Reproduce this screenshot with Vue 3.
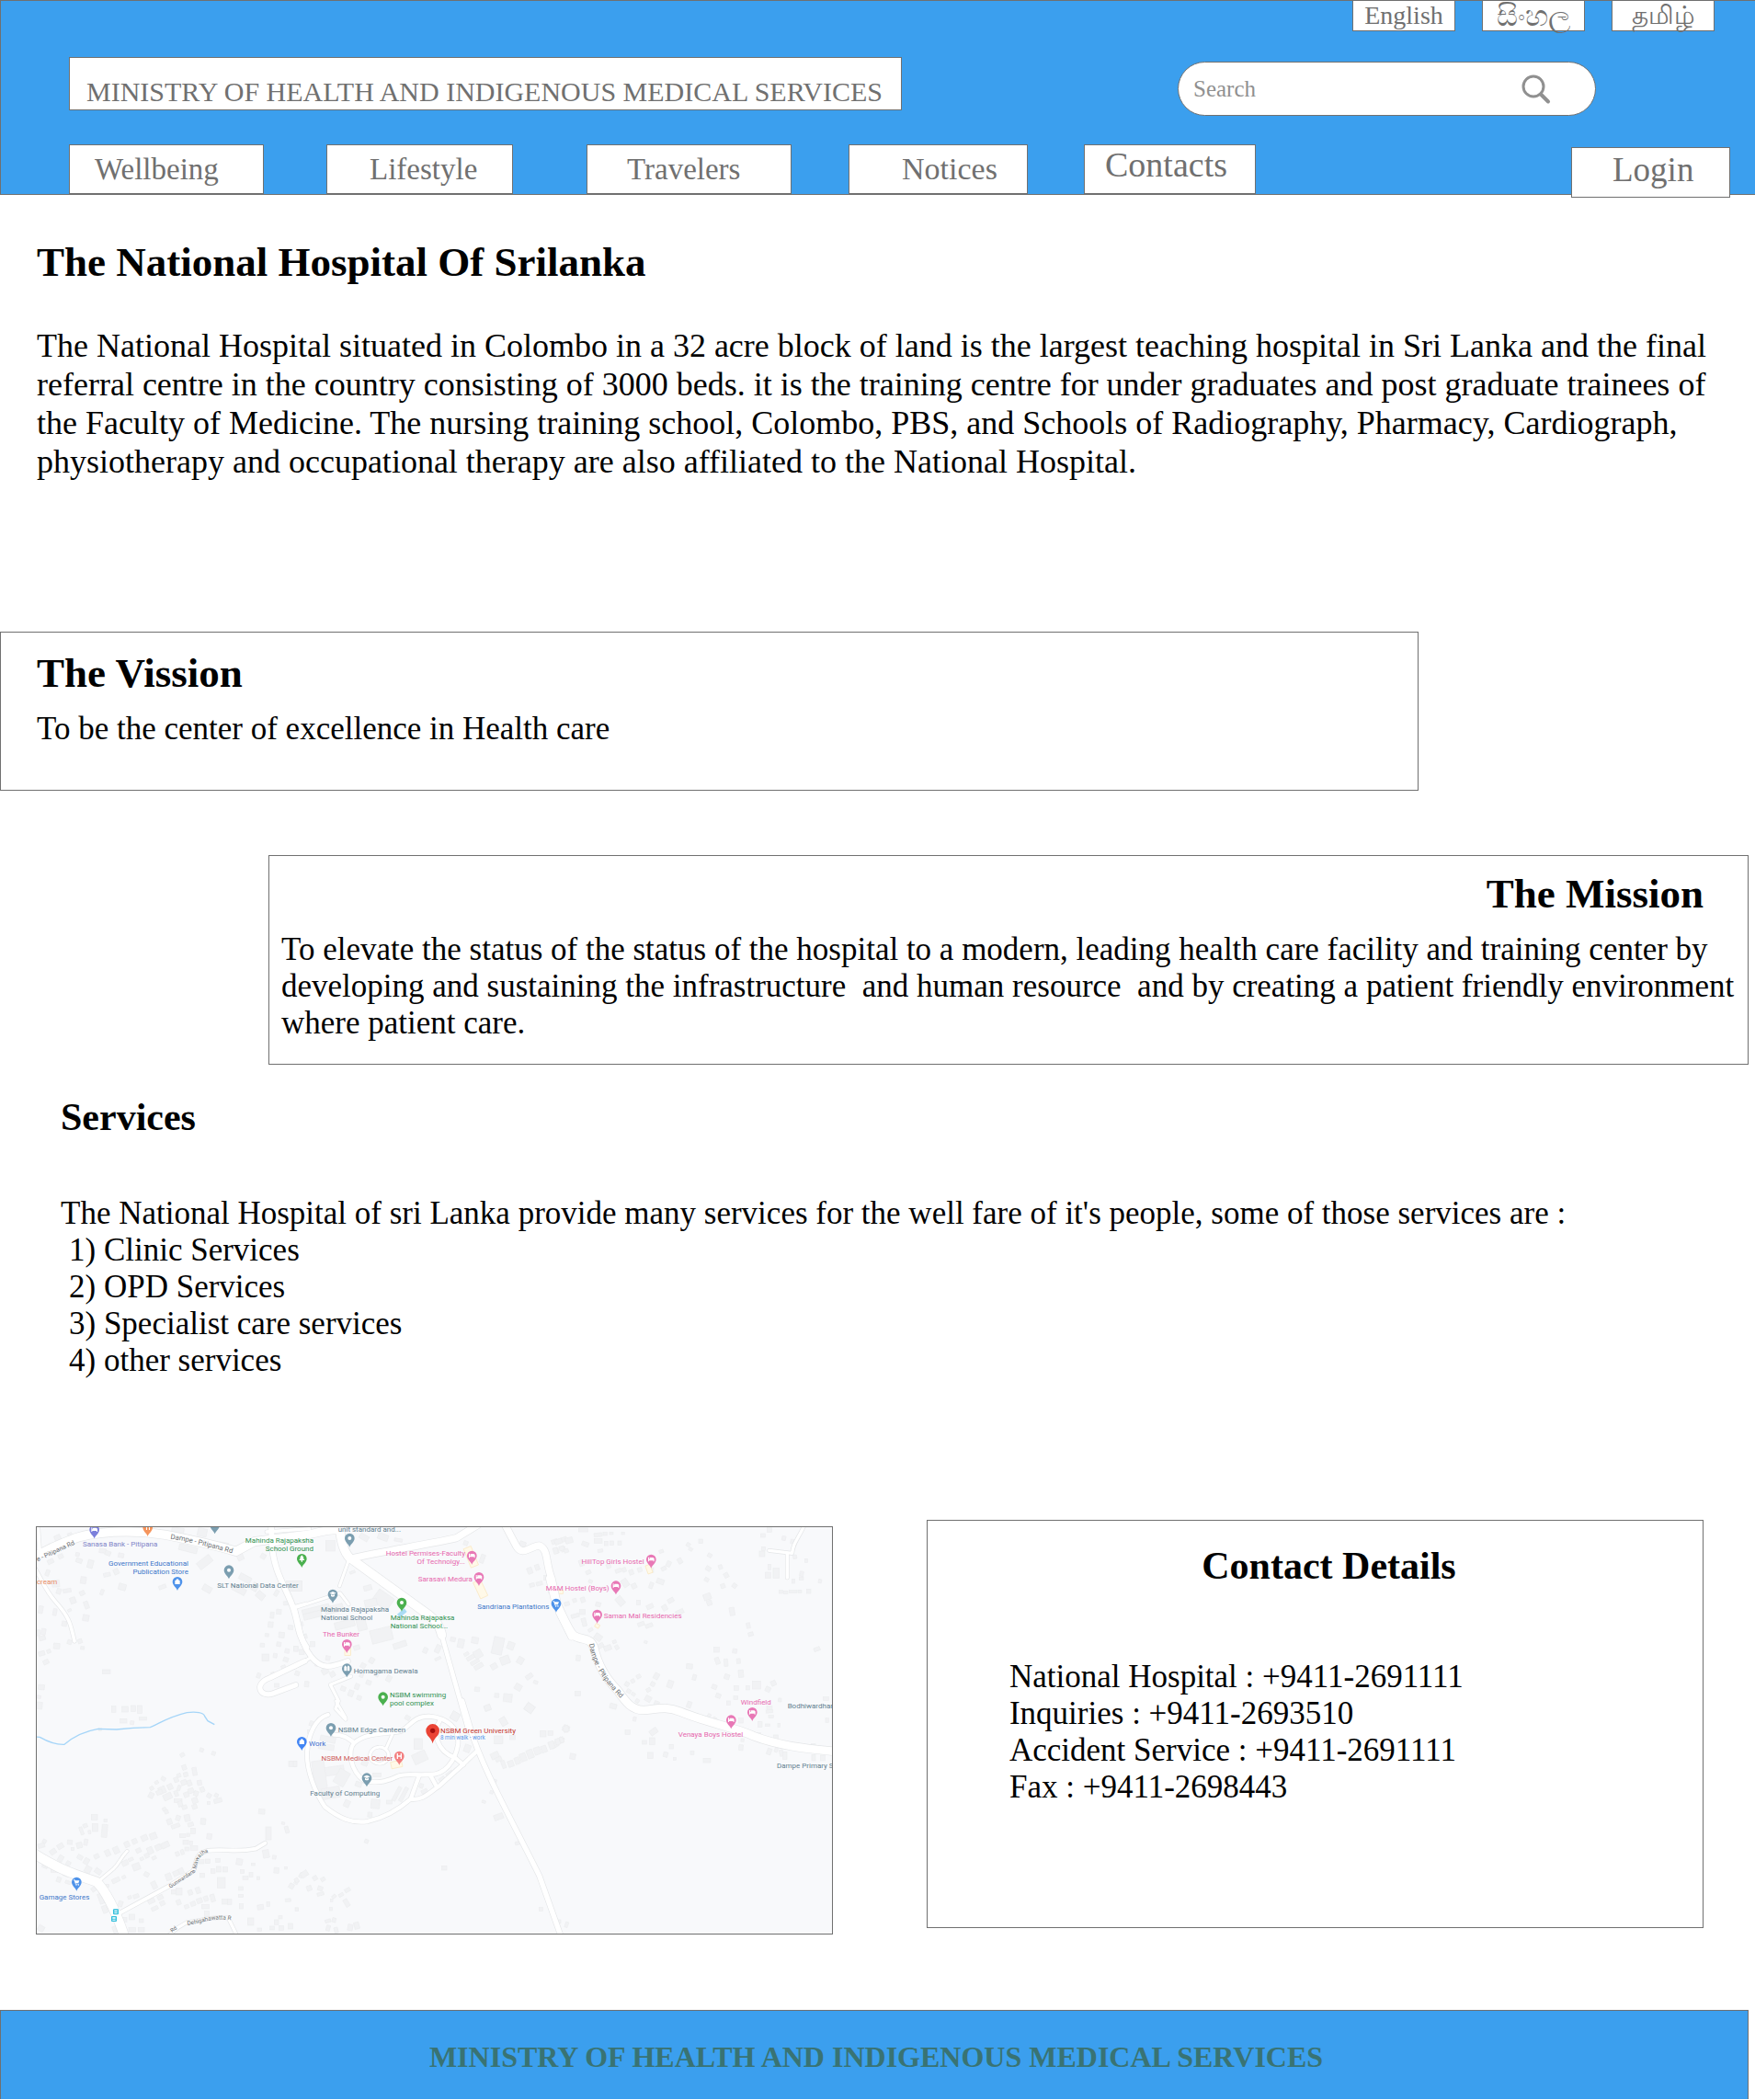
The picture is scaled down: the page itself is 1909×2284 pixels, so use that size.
<script setup>
const languages = [
  { label: 'English', lang: 'en' },
  { label: 'සිංහල', lang: 'si' },
  { label: 'தமிழ்', lang: 'ta' },
]

const navigation = [
  { label: 'Wellbeing', key: 'wellbeing' },
  { label: 'Lifestyle', key: 'lifestyle' },
  { label: 'Travelers', key: 'travelers' },
  { label: 'Notices', key: 'notices' },
  { label: 'Contacts', key: 'contacts' },
  { label: 'Login', key: 'login' },
]

const services = ['Clinic Services', 'OPD Services', 'Specialist care services', 'other services']

const contacts = [
  { name: 'National Hospital', phone: '+9411-2691111' },
  { name: 'Inquiries', phone: '+9411-2693510' },
  { name: 'Accident Service', phone: '+9411-2691111' },
  { name: 'Fax', phone: '+9411-2698443' },
]

// The map is drawn in tiles: each one holds its own roads, buildings, pins and labels.
// Building: [centre x, centre y, width, height, angle]
const GREY = '#7b9eb0'
const PINK = '#e878b6'
const GREEN = '#4bb04f'
const BLUE = '#4f93ea'

const tiles = [
  {
    id: 'nw', x: -30, y: -33,
    roads: [
      [32, 'M0 140L80 100C140 75 170 58 240 52C320 44 400 50 450 58C520 72 590 85 680 112L740 80L900 60'],
      [15, 'M32 0L40 120'],
      [15, 'M20 160C50 210 55 235 90 275C135 325 140 345 153 405'],
      [22, 'M795 20L797 80C800 180 850 240 868 300C885 350 880 380 910 425'],
      [14, 'M780 48L920 38'],
      [13, 'M868 293L910 282'],
      [20, 'M905 470L790 525C735 545 760 590 800 576L875 548'],
    ],
    buildings: [
      [98, 68, 20, 18, -25], [138, 58, 14, 12, -20], [75, 145, 20, 14, -25], [108, 128, 16, 14, -25], [168, 142, 20, 14, 20], [163, 122, 12, 12, 10], [205, 153, 18, 26, 15], [245, 110, 22, 14, 8], [262, 118, 18, 14, 20], [305, 125, 18, 14, 10],
      [65, 182, 12, 20, 20], [92, 217, 24, 22, -5], [182, 206, 18, 22, 8], [259, 188, 22, 12, -12], [289, 178, 16, 18, -25], [309, 228, 24, 20, 15], [243, 245, 10, 18, 20], [129, 240, 26, 12, -10], [102, 242, 14, 18, 20], [178, 248, 16, 14, -25], [148, 272, 18, 20, -20], [192, 287, 14, 24, -20], [89, 310, 12, 22, 10], [43, 302, 14, 24, 10], [137, 304, 12, 8, -25], [190, 329, 20, 20, 10], [120, 348, 16, 16, 10],
      [36, 378, 10, 20, 5], [52, 374, 14, 20, 10], [48, 395, 20, 14, -15], [95, 421, 20, 18, 5], [137, 408, 14, 14, 20], [171, 405, 14, 14, -20], [179, 427, 12, 10, 5], [46, 445, 20, 14, -15], [69, 438, 12, 12, -20], [60, 473, 18, 14, -25], [257, 505, 26, 14, 0], [45, 555, 20, 16, 5], [37, 587, 12, 10, 10], [38, 615, 20, 22, 5],
      [281, 627, 14, 20, 0], [318, 627, 20, 18, 0], [345, 625, 14, 20, 0], [366, 628, 14, 26, 0], [313, 665, 22, 14, 0], [341, 671, 12, 12, 10], [376, 658, 24, 10, 0],
      [578, 147, 50, 26, -38], [524, 103, 60, 20, 14], [586, 234, 30, 20, 30], [440, 228, 24, 12, -20], [570, 50, 30, 26, 12], [490, 45, 40, 20, 8], [640, 90, 30, 14, 10], [710, 200, 40, 20, 28], [690, 237, 46, 20, 28], [760, 256, 28, 22, 40], [694, 130, 20, 22, -25], [769, 128, 16, 16, 30], [742, 228, 20, 26, 30], [812, 248, 12, 20, 30], [880, 225, 32, 34, 0],
      [843, 281, 16, 12, -5], [820, 309, 16, 16, 5], [798, 320, 12, 20, 5], [793, 351, 16, 18, 5], [858, 360, 16, 14, 5], [781, 385, 12, 10, 5], [829, 385, 18, 18, 5], [766, 418, 14, 12, 5], [820, 415, 14, 14, 10], [876, 430, 14, 16, 5], [776, 458, 22, 22, 0], [847, 437, 14, 14, 10], [808, 452, 12, 14, 10], [843, 465, 16, 14, 20], [754, 517, 12, 16, 20], [801, 513, 12, 14, -20], [835, 490, 14, 12, -20], [880, 510, 14, 14, 20], [813, 549, 14, 12, 0],
    ],
    pins: [
      [218, 70, '#7b7fdb', 'bed'], [392, 63, '#f5945c', 'fork'], [611, 55, GREY, 'dot'], [489, 240, BLUE, 'bag'], [657, 202, GREY, 'dot'],
    ],
    labels: [
      [180, 97, 'start', '#7d83c7', 'Sanasa Bank - Pitipana'],
      [525, 158, 'end', '#3d77c9', 'Government Educational'],
      [525, 185, 'end', '#3d77c9', 'Publication Store'],
      [97, 219, 'end', '#e98b63', 'cream'],
      [619, 230, 'start', '#62808f', 'SLT National Data Center'],
    ],
    streets: [
      ['M33 145L190 72', 'e - Pitipana Rd', 21],
      ['M466 71C530 80 600 100 690 124', 'Dampe - Pitipana Rd', 23],
    ],
  },
  {
    id: 'n', x: 840, y: -33,
    roads: [
      [30, 'M-60 80L40 58C100 45 120 40 150 42'],
      [32, 'M148 20C150 70 160 110 180 132L440 320C470 345 475 360 482 385'],
      [26, 'M180 136C300 110 430 90 530 68L600 25'],
      [13, 'M178 140L148 225'],
      [13, 'M0 297L150 248L178 285'],
      [20, 'M0 295C20 370 20 410 55 455C90 500 120 490 175 470'],
      [14, 'M0 490L55 458'],
      [14, 'M185 520L118 547L145 600L135 625L168 660'],
      [18, 'M480 380L570 700'],
      [26, 'M688 25L725 95C745 130 770 95 800 93C830 105 820 150 840 200L865 310L905 390'],
      [13, 'M0 548L8 546'],
    ],
    buildings: [
      [118, 94, 30, 34, 0], [228, 66, 30, 18, 30], [290, 65, 34, 20, 20], [340, 75, 26, 10, 10], [0, 225, 50, 34, 0], [240, 231, 26, 16, -15], [190, 180, 18, 8, -20],
      [290, 270, 60, 46, 35], [250, 280, 40, 24, -12], [60, 320, 60, 20, -14], [70, 300, 90, 14, -14], [130, 300, 60, 24, -14], [165, 350, 66, 24, -14], [285, 385, 70, 44, -14], [220, 350, 30, 40, -14], [345, 417, 44, 18, -18], [428, 435, 14, 18, 25], [469, 430, 16, 26, 25], [469, 462, 20, 8, -25],
      [518, 399, 16, 14, 10], [544, 412, 20, 28, 12], [590, 402, 22, 20, 10], [562, 447, 16, 10, -30], [577, 458, 30, 12, -30], [590, 473, 30, 12, -30], [602, 487, 30, 14, -30], [600, 447, 26, 26, -30], [665, 420, 34, 56, 12], [707, 420, 22, 24, 20], [688, 467, 30, 26, -20], [652, 487, 20, 18, -30], [738, 468, 20, 22, 30], [767, 520, 24, 14, -35], [731, 555, 22, 20, 30], [788, 539, 14, 10, 20], [597, 562, 16, 14, 5], [661, 582, 14, 14, 5], [697, 590, 28, 26, 5], [768, 623, 28, 26, 35], [631, 623, 20, 18, -20], [683, 667, 20, 26, -30], [525, 650, 26, 26, 30],
      [769, 175, 16, 20, -20], [793, 164, 14, 18, -20], [776, 222, 16, 12, -15], [800, 217, 20, 12, -15], [822, 198, 14, 14, 0], [745, 90, 20, 20, 20], [850, 80, 20, 14, -20], [880, 73, 20, 14, -20], [856, 110, 14, 16, -15], [878, 105, 14, 16, -15], [840, 240, 20, 14, 0], [614, 136, 14, 28, 20], [560, 85, 14, 14, 20],
      [41, 545, 14, 18, 5], [101, 503, 22, 18, -30], [75, 480, 14, 14, 10], [125, 513, 16, 16, -30], [160, 560, 16, 14, 20], [185, 575, 16, 20, 20], [205, 553, 14, 18, 20], [212, 590, 14, 14, 20], [243, 540, 16, 14, 20], [253, 468, 16, 18, 30], [225, 485, 16, 16, 30], [270, 512, 14, 18, 30], [309, 527, 16, 20, 30], [204, 426, 20, 14, -15], [32, 390, 20, 14, -15], [20, 350, 18, 14, -15], [60, 415, 14, 16, 0], [25, 440, 16, 16, 0], [5, 430, 14, 16, 0], [110, 460, 14, 14, 10], [290, 590, 14, 14, 20], [220, 515, 12, 16, 20],
    ],
    yards: [[577, 130, 26, 66, -22], [608, 235, 26, 58, -25], [175, 440, 20, 24, 0]],
    ponds: [[352, 313, 30, 14, -40]],
    pins: [
      [181, 98, GREY, 'dot'], [25, 165, GREEN, 'tree'], [580, 155, PINK, 'bed'], [603, 225, PINK, 'bed'], [126, 281, GREY, 'cap'],
      [351, 308, GREEN, 'dot'], [855, 311, BLUE, 'cart'], [172, 444, PINK, 'bed'], [172, 523, GREY, 'temple'], [290, 616, GREEN, 'dot'],
    ],
    labels: [
      [143, 47, 'start', '#62808f', 'unit standard and...'],
      [63, 84, 'end', '#2f9150', 'Mahinda Rajapaksha'],
      [63, 111, 'end', '#2f9150', 'School Ground'],
      [558, 127, 'end', '#e768ae', 'Hostel Permises-Faculty'],
      [558, 154, 'end', '#e768ae', 'Of Technolgy...'],
      [582, 211, 'end', '#e768ae', 'Sarasavi Medura'],
      [87, 310, 'start', '#62808f', 'Mahinda Rajapaksha'],
      [87, 337, 'start', '#62808f', 'National School'],
      [314, 336, 'start', '#2f9150', 'Mahinda Rajapaksa'],
      [314, 363, 'start', '#2f9150', 'National School...'],
      [832, 300, 'end', '#3d77c9', 'Sandriana Plantations'],
      [93, 390, 'start', '#e768ae', 'The Bunker'],
      [194, 509, 'start', '#62808f', 'Homagama Dewala'],
      [312, 589, 'start', '#2f9150', 'NSBM swimming'],
      [312, 616, 'start', '#2f9150', 'pool complex'],
    ],
    streets: [],
  },
  {
    id: 'ne', x: 1680, y: -33,
    roads: [
      [30, 'M-5 200L15 280C35 320 50 360 70 385C100 405 125 390 138 425C150 480 180 530 215 565C240 600 260 630 300 630C340 628 370 615 420 635C520 675 610 690 660 715C740 745 820 755 930 765'],
      [14, 'M826 25C800 80 790 80 785 118L710 109'],
      [14, 'M769 120L769 198'],
    ],
    buildings: [
      [103, 42, 30, 12, 0], [22, 80, 24, 16, -20], [57, 76, 24, 18, -15], [13, 110, 14, 20, -15], [33, 102, 16, 14, -15], [48, 110, 14, 12, -20], [110, 88, 22, 14, 20], [152, 58, 26, 12, -5], [152, 78, 26, 14, 0], [175, 55, 14, 10, 0], [195, 53, 12, 8, 0], [178, 86, 12, 14, 0], [197, 85, 12, 14, 0], [222, 85, 12, 14, 0], [233, 53, 10, 8, 0], [159, 110, 16, 10, -10], [97, 150, 14, 20, -20], [120, 180, 16, 12, -25], [186, 160, 14, 14, -20], [218, 175, 20, 12, -20], [237, 172, 12, 14, -20], [260, 180, 14, 16, -20], [288, 172, 14, 14, -20], [325, 173, 16, 16, 0], [366, 168, 16, 12, -25], [382, 153, 14, 18, 25], [358, 112, 14, 10, -20], [419, 143, 14, 18, -30], [446, 90, 12, 12, 30], [454, 105, 12, 10, 30], [487, 79, 14, 14, 0], [516, 125, 14, 12, 30],
      [240, 215, 20, 26, -35], [269, 225, 16, 16, -25], [325, 223, 12, 20, 20], [355, 210, 24, 16, 20], [224, 274, 22, 30, -40], [284, 279, 12, 16, 0], [321, 292, 22, 14, -25], [369, 296, 16, 18, -30], [389, 272, 20, 14, -30], [418, 310, 26, 14, -25], [292, 349, 22, 12, -20], [318, 354, 24, 12, -20], [307, 408, 10, 8, 20], [127, 210, 12, 10, 20], [102, 270, 14, 16, -20], [75, 272, 12, 12, -20], [50, 283, 16, 12, -15], [152, 285, 16, 14, 15], [101, 310, 18, 16, 0], [77, 322, 26, 12, -15], [106, 343, 14, 26, -15], [127, 368, 16, 10, -30], [152, 392, 24, 20, 35], [183, 427, 24, 16, -20], [205, 407, 12, 10, -20], [213, 425, 12, 14, -30], [160, 420, 20, 14, -30],
      [511, 168, 16, 14, 30], [551, 163, 12, 14, -20], [570, 190, 14, 16, -30], [506, 204, 14, 12, 30], [559, 225, 14, 14, -20], [597, 224, 14, 14, 35], [508, 260, 24, 20, -20], [515, 280, 16, 16, -20], [589, 308, 16, 26, -10], [642, 354, 12, 18, -10], [650, 382, 16, 12, -15], [866, 431, 20, 12, -20], [538, 433, 18, 16, 0], [598, 437, 14, 14, 10], [541, 469, 14, 22, -20], [569, 475, 12, 24, -5], [610, 470, 12, 16, -5], [450, 487, 20, 16, 5], [466, 523, 12, 18, 15], [572, 521, 16, 16, 20], [618, 511, 16, 24, -5], [531, 554, 16, 14, 20], [603, 558, 14, 16, 0], [640, 557, 12, 14, 0], [669, 548, 26, 26, 0], [706, 562, 16, 16, 25], [724, 542, 16, 16, -25], [544, 583, 16, 14, 20], [577, 607, 12, 14, 0], [745, 597, 10, 12, 5], [711, 634, 22, 10, -5], [716, 651, 16, 8, 0], [742, 679, 8, 12, 0], [680, 676, 14, 18, 0], [705, 679, 16, 8, 0], [618, 664, 14, 16, 0], [895, 593, 18, 12, 0], [899, 663, 10, 14, 0], [711, 623, 18, 12, 0], [601, 590, 14, 12, 0],
      [87, 460, 14, 18, 5], [86, 576, 18, 14, 0], [201, 617, 22, 16, 15], [271, 659, 10, 14, 10], [246, 545, 14, 14, 30], [265, 535, 12, 12, -30], [284, 520, 14, 12, -30], [252, 568, 14, 12, 30], [330, 545, 14, 14, 30], [342, 519, 16, 20, 30], [316, 564, 14, 12, -30], [387, 545, 18, 24, 20], [315, 593, 20, 18, 30], [343, 608, 16, 14, 20], [449, 612, 14, 20, 20], [267, 578, 12, 10, 30], [280, 600, 12, 12, 30], [514, 648, 10, 12, 30], [532, 660, 12, 14, 30],
      [47, 690, 20, 20, 25], [32, 727, 16, 16, 20], [10, 743, 24, 18, -30], [69, 781, 18, 18, 10], [248, 702, 16, 14, 0], [333, 700, 26, 18, -35], [328, 731, 18, 22, 0], [303, 735, 14, 12, 0], [322, 778, 18, 20, 0], [372, 775, 14, 16, 15], [391, 749, 14, 14, 0], [402, 789, 10, 8, 0], [459, 769, 12, 12, 0], [507, 794, 24, 14, 0], [618, 752, 14, 18, 5], [623, 728, 10, 10, 5], [644, 703, 12, 10, 0], [677, 709, 12, 10, 0], [732, 719, 16, 16, 0], [710, 765, 14, 20, 20], [733, 760, 10, 14, 20], [750, 770, 12, 20, -15], [761, 778, 14, 24, 0], [854, 747, 14, 14, 0], [855, 785, 12, 20, 0], [885, 786, 16, 18, 0],
      [711, 42, 16, 14, 0], [690, 60, 14, 12, 0], [758, 69, 12, 14, 10], [692, 103, 12, 12, 0], [687, 120, 18, 18, 0], [794, 130, 12, 12, -10], [831, 142, 10, 12, 0], [711, 163, 10, 18, 0], [706, 190, 18, 20, 0], [733, 183, 20, 34, 0], [789, 209, 10, 14, 0], [816, 185, 12, 16, 10], [815, 200, 14, 10, 0], [876, 209, 10, 12, 10], [749, 244, 12, 10, 0], [764, 246, 14, 10, 0], [788, 243, 26, 8, 0], [810, 243, 12, 10, 0], [839, 242, 14, 14, 0], [786, 80, 12, 14, 10],
    ],
    yards: [[318, 170, 16, 28, -20], [28, 244, 18, 12, 0], [149, 355, 14, 12, 30]],
    pins: [
      [325, 167, PINK, 'bed'], [210, 253, PINK, 'bed'], [149, 347, PINK, 'bed'], [655, 666, PINK, 'bed'], [586, 691, PINK, 'bed'],
    ],
    labels: [
      [302, 154, 'end', '#e768ae', 'HillTop Girls Hostel'],
      [188, 240, 'end', '#e768ae', 'M&M Hostel (Boys)'],
      [170, 331, 'start', '#e768ae', 'Saman Mal Residencies'],
      [667, 611, 'middle', '#e768ae', 'Windfield'],
      [519, 717, 'middle', '#e768ae', 'Venaya Boys Hostel'],
      [770, 624, 'start', '#62808f', 'Bodhiwardhar'],
      [735, 819, 'start', '#62808f', 'Dampe Primary S'],
    ],
    streets: [['M122 415C138 490 170 540 245 610', 'Dampe - Pitipana Rd', 23]],
  },
  {
    id: 'sw', x: -30, y: 567,
    roads: [
      [34, 'M0 485C100 550 150 565 225 590C255 620 290 690 320 780'],
      [13, 'M232 588L280 548C300 530 300 515 325 490'],
      [16, 'M300 692L460 605L540 555C555 530 540 500 590 488C650 482 680 495 745 482L775 464'],
      [14, 'M430 790L490 740L520 722C580 715 600 702 655 708L690 780'],
    ],
    stream: 'M20 117L40 118C75 138 95 143 120 142C150 115 190 98 230 91L290 93L345 88L400 86C430 75 450 55 520 38C550 34 575 38 578 50L588 65L610 77',
    buildings: [
      [505, 176, 14, 12, -30], [568, 160, 12, 12, 20], [607, 171, 12, 12, 20], [511, 217, 14, 16, -20], [545, 230, 14, 26, -10], [516, 240, 14, 14, -15], [494, 243, 12, 12, -20], [443, 254, 14, 12, 30], [485, 257, 14, 16, -20], [561, 267, 14, 16, -10], [421, 266, 12, 10, -30], [510, 266, 18, 16, -20], [528, 268, 14, 18, -20], [405, 285, 12, 12, -30], [465, 280, 16, 18, -25], [494, 284, 10, 18, 20], [439, 291, 22, 22, -25], [570, 289, 14, 16, -20], [403, 308, 16, 18, 25], [430, 298, 20, 14, -25], [457, 312, 28, 20, -25], [485, 302, 12, 18, -20], [518, 306, 16, 16, -20], [533, 293, 18, 16, -20], [550, 302, 14, 16, 20], [546, 325, 18, 18, -20], [491, 325, 26, 12, 0], [498, 336, 14, 18, -20], [512, 347, 16, 12, -20], [545, 345, 16, 14, -20], [592, 309, 14, 14, 30], [616, 308, 12, 12, 30], [621, 325, 26, 14, -15], [591, 333, 10, 10, 0], [446, 353, 12, 10, -25], [453, 362, 12, 12, -20], [463, 394, 16, 18, -20], [491, 382, 14, 16, 20], [521, 382, 18, 22, -10], [573, 393, 16, 20, 5], [532, 403, 18, 12, -15], [483, 408, 28, 12, -20], [540, 424, 14, 18, 0], [506, 440, 20, 12, 0], [524, 437, 10, 10, 0], [593, 442, 16, 18, 10], [516, 461, 18, 14, 0], [533, 463, 10, 12, 0], [520, 483, 14, 12, 0], [543, 480, 24, 14, 0],
      [218, 380, 20, 18, 0], [254, 390, 10, 10, 0], [188, 407, 14, 12, -20], [176, 424, 10, 26, -20], [220, 413, 18, 26, 0], [251, 424, 18, 42, 5], [202, 428, 8, 12, -10], [190, 461, 12, 20, 10], [169, 471, 18, 18, -15], [138, 461, 16, 14, 5], [147, 483, 10, 10, 0], [107, 474, 20, 16, -30], [55, 458, 12, 12, 30], [45, 472, 22, 14, -15], [83, 492, 20, 16, -35], [108, 514, 16, 20, 30], [133, 530, 14, 14, 30], [171, 510, 18, 14, 30], [192, 523, 16, 20, 30], [225, 507, 16, 14, -25], [261, 496, 16, 20, -25], [289, 487, 18, 22, -25], [324, 468, 16, 18, -25], [349, 458, 16, 16, -25], [381, 447, 20, 18, -25], [410, 441, 22, 20, -20], [362, 488, 16, 14, -25], [400, 488, 18, 22, -25], [426, 478, 18, 18, -25], [449, 470, 26, 18, -25], [337, 517, 16, 10, -25], [373, 515, 12, 10, -25], [389, 505, 14, 14, -25], [413, 512, 14, 10, -25], [355, 541, 24, 22, -20], [388, 566, 16, 14, 30], [318, 529, 20, 16, -25], [197, 550, 20, 22, 30], [230, 556, 22, 16, 35], [288, 585, 26, 14, -25], [314, 575, 12, 10, -25], [88, 552, 24, 14, 0], [57, 538, 18, 14, 20], [124, 567, 18, 10, 20], [102, 583, 14, 16, 20], [132, 592, 18, 10, 20], [218, 613, 20, 14, -35], [240, 645, 16, 34, -20], [252, 680, 16, 24, -20], [261, 603, 10, 10, 0], [303, 662, 14, 18, 20], [333, 641, 12, 10, -20], [354, 637, 18, 12, -20], [314, 714, 20, 14, 0], [340, 705, 18, 18, 0], [371, 717, 14, 12, 0], [341, 747, 22, 14, 0], [371, 747, 20, 14, 0], [288, 745, 20, 22, -20], [44, 742, 20, 18, 30],
      [489, 499, 12, 14, -20], [505, 493, 10, 16, -20], [460, 574, 18, 22, -20], [485, 562, 20, 16, -25], [501, 555, 16, 18, -25], [413, 601, 16, 24, -25], [570, 569, 14, 14, 0], [404, 653, 22, 14, -25], [433, 641, 18, 14, -25], [440, 660, 16, 14, -25], [415, 677, 22, 12, -25], [477, 623, 16, 14, 0], [494, 622, 20, 22, 0], [531, 625, 14, 16, -20], [556, 618, 14, 20, -20], [493, 657, 14, 16, -20], [519, 671, 14, 12, -20], [540, 662, 16, 14, -20], [561, 652, 18, 16, -20], [582, 645, 14, 16, -20], [604, 643, 14, 24, -15], [580, 671, 24, 14, 0], [585, 695, 16, 18, 0], [645, 655, 20, 16, 0], [659, 655, 14, 18, 0], [632, 593, 26, 34, 0], [568, 524, 16, 14, 0], [588, 523, 16, 14, 0], [621, 521, 14, 12, 0], [605, 555, 14, 14, 0], [624, 549, 14, 18, 0], [645, 550, 16, 16, 0], [691, 525, 20, 20, 10], [736, 533, 12, 8, 0], [701, 556, 12, 12, 0], [711, 577, 18, 12, 0], [729, 567, 12, 14, 0], [753, 578, 10, 10, 0], [812, 553, 16, 18, 5], [843, 545, 8, 8, 0], [805, 510, 12, 12, 10], [778, 499, 20, 26, -10], [764, 361, 20, 16, 5], [786, 432, 18, 42, 0], [834, 399, 10, 8, 10], [846, 420, 12, 22, -15], [865, 205, 26, 18, 0], [696, 612, 14, 12, 0], [696, 636, 16, 10, 0], [697, 670, 12, 16, 0], [760, 673, 20, 16, -10], [785, 663, 10, 16, 0], [850, 650, 18, 10, -5], [861, 604, 16, 16, 30], [877, 591, 12, 14, 30], [893, 569, 12, 16, 30], [728, 720, 20, 24, 0], [757, 746, 14, 10, 0], [798, 741, 14, 12, 0], [812, 722, 14, 16, 0], [828, 741, 14, 14, 0], [858, 735, 14, 18, 0], [879, 680, 10, 10, 0], [825, 706, 12, 10, 0], [237, 93, 10, 8, 0],
    ],
    stops: [[288, 688], [282, 711]],
    pins: [[160, 620, BLUE, 'cart']],
    labels: [[38, 648, 'start', '#3d77c9', 'Gamage Stores']],
    streets: [
      ['M466 611L545 560C560 530 545 505 600 490', 'Gunwardana Mawatha', 18],
      ['M522 732C580 722 610 705 665 716', 'Dehigahawatta Rd', 19],
      ['M472 756L502 732', 'Rd', 18],
    ],
  },
  {
    id: 's', x: 840, y: 567,
    roads: [
      [17, 'M110 45C70 55 45 110 42 170C40 230 70 300 100 345C150 385 190 400 240 393C300 380 340 355 380 320C420 325 440 300 470 280L550 208L600 160'],
      [13, 'M137 0L145 15L168 55'],
      [17, 'M130 110C160 110 175 120 196 137C240 100 300 110 350 98C380 80 390 50 440 50C500 55 540 90 535 140C525 200 490 240 445 240C400 245 370 235 340 245C310 260 280 270 230 262C180 225 175 160 196 137'],
      [13, 'M248 180A30 27 0 1 0 308 175A30 27 0 1 0 248 180M300 155L320 110'],
      [17, 'M475 65C450 100 465 165 525 185L552 208M445 243L465 280M408 243L382 315'],
      [20, 'M548 0L575 90C610 210 700 370 800 570L875 780'],
    ],
    buildings: [
      [405, 140, 28, 34, 0], [410, 184, 46, 34, -25], [113, 230, 100, 28, -8], [83, 245, 40, 100, -8], [155, 250, 38, 50, 30], [120, 300, 60, 36, -10], [110, 125, 50, 18, 12], [105, 150, 50, 18, 8], [265, 336, 28, 30, 5], [172, 335, 18, 22, 25], [190, 305, 22, 12, -10], [210, 272, 20, 16, 20], [247, 371, 14, 16, 5], [310, 330, 18, 12, 0], [335, 303, 12, 50, 28], [357, 305, 12, 50, 28], [230, 203, 20, 16, 20], [270, 241, 26, 12, 0], [236, 458, 12, 12, 20], [490, 545, 16, 14, 0],
      [415, 277, 12, 14, 20], [425, 295, 20, 12, -25], [483, 256, 20, 14, -35], [508, 238, 24, 14, -35], [530, 222, 20, 10, -35], [565, 155, 20, 24, 20], [60, 75, 20, 16, 20], [50, 100, 14, 12, 0], [370, 55, 16, 14, 30], [525, 50, 26, 26, 30], [631, 22, 20, 18, -20], [683, 67, 20, 26, -30], [768, 23, 28, 26, 35], [667, 127, 28, 26, 0], [713, 119, 18, 14, 0], [812, 107, 20, 20, 0], [836, 105, 16, 14, 0], [887, 91, 18, 20, -20], [655, 178, 26, 20, -25], [667, 190, 20, 14, -25],
      [683, 207, 12, 26, -20], [707, 205, 18, 20, -20], [728, 195, 16, 22, -20], [747, 184, 20, 26, -20], [770, 173, 20, 28, -20], [793, 163, 20, 24, -20], [815, 157, 18, 22, -20], [840, 144, 18, 24, -20], [860, 133, 14, 20, -20], [873, 127, 12, 18, -20], [619, 329, 12, 8, 20], [644, 298, 10, 10, 20], [667, 378, 30, 18, -20], [733, 463, 24, 10, -15], [655, 262, 10, 12, 20], [805, 680, 12, 12, 0], [889, 730, 10, 18, 20], [866, 720, 8, 12, 0],
      [33, 565, 24, 18, -35], [8, 585, 12, 14, -30], [68, 578, 14, 14, -30], [94, 582, 14, 12, -30], [49, 611, 16, 16, -20], [85, 612, 16, 14, 20], [86, 630, 22, 10, -15], [130, 638, 14, 10, -40], [122, 651, 8, 8, 0], [153, 633, 16, 10, -30], [174, 617, 18, 12, -30], [171, 659, 14, 26, -30], [120, 679, 10, 10, 0], [8, 680, 10, 10, 0], [110, 718, 18, 10, -15], [130, 715, 12, 14, 15], [111, 741, 12, 18, 15], [137, 748, 12, 18, -15], [183, 739, 16, 20, 10], [204, 733, 16, 22, -15], [3, 205, 12, 18, 0],
    ],
    yards: [[334, 207, 36, 22, -12]],
    pins: [
      [120, 117, GREY, 'dot'], [25, 162, '#4285f4', 'bag'], [343, 209, '#f37f80', 'hospital'], [237, 280, GREY, 'cap'],
    ],
    labels: [
      [143, 102, 'start', '#62808f', 'NSBM Edge Canteen'],
      [48, 147, 'start', '#3f6fd0', 'Work'],
      [322, 194, 'end', '#cf5f5f', 'NSBM Medical Center'],
      [52, 308, 'start', '#62808f', 'Faculty of Computing'],
    ],
    streets: [],
  },
]

const glyphs = {
  dot: 'M-6 -29a6 6 0 1 0 12 0a6 6 0 1 0 -12 0Z',
  bed: 'M-10 -36h3v6h3a3 3 0 0 1 0 -5h10l4 3v10h-3v-3h-14v3h-3Z',
  cart: 'M-10 -37h4l1 3h14l-3 8h-9l1 2h9v2h-11l-4 -12h-2ZM-3 -20a2 2 0 1 0 4 0a2 2 0 1 0 -4 0M4 -20a2 2 0 1 0 4 0a2 2 0 1 0 -4 0',
  bag: 'M-8 -33h3a5 5 0 0 1 10 0h3v12h-16Z',
  tree: 'M0 -41l7 9h-3l5 8h-7v5h-4v-5h-7l5 -8h-3Z',
  cap: 'M0 -38l11 5l-11 5l-11 -5ZM-6 -29l6 3l6 -3v6q-6 4 -12 0Z',
  temple: 'M-9 -34l4 -5l4 5v13h-8ZM1 -34l4 -5l4 5v13h-8Z',
  fork: 'M-6 -42h2v8h2v-8h2v10l-2 2v9h-3v-9l-2 -2ZM3 -42h4v21h-3v-9h-1Z',
  hospital: 'M-8 -38h4v7h8v-7h4v18h-4v-7h-8v7h-4Z',
}
</script>

<template>
  <div class="page">
    <header class="site-header">
      <ul class="languages">
        <li v-for="item in languages" :key="item.lang">
          <button type="button" class="language" :class="item.lang" :lang="item.lang">{{ item.label }}</button>
        </li>
      </ul>

      <div class="masthead">
        <p class="brand">MINISTRY OF HEALTH AND INDIGENOUS MEDICAL SERVICES</p>
        <form class="search" role="search" @submit.prevent>
          <input type="search" class="search-field" placeholder="Search" aria-label="Search" />
          <button type="submit" class="search-button" aria-label="Submit search">
            <svg viewBox="0 0 34 34" width="34" height="34" fill="none" stroke="#909090" aria-hidden="true">
              <circle cx="14" cy="14" r="11" stroke-width="3" />
              <path d="M22 22.500L30 30.500" stroke-width="4" stroke-linecap="round" />
            </svg>
          </button>
        </form>
      </div>

      <nav class="nav" aria-label="Main">
        <a v-for="item in navigation" :key="item.key" href="#" class="nav-link" :class="item.key">{{ item.label }}</a>
      </nav>
    </header>

    <main>
      <section class="intro">
        <h1>The National Hospital Of Srilanka</h1>
        <p>
          The National Hospital situated in Colombo in a 32 acre block of land is the largest teaching hospital in Sri
          Lanka and the final referral centre in the country consisting of 3000 beds. it is the training centre for
          under graduates and post graduate trainees of the Faculty of Medicine. The nursing training school, Colombo,
          PBS, and Schools of Radiography, Pharmacy, Cardiograph, physiotherapy and occupational therapy are also
          affiliated to the National Hospital.
        </p>
      </section>

      <section class="vision">
        <h2>The Vission</h2>
        <p>To be the center of excellence in Health care</p>
      </section>

      <section class="mission">
        <h2>The Mission</h2>
        <p>To elevate the status of the status of the hospital to a modern, leading health care facility and training center by developing and sustaining the infrastructure&nbsp; and human resource&nbsp; and by creating a patient friendly environment where patient care.</p>
      </section>

      <section class="services">
        <h2>Services</h2>
        <p>The National Hospital of sri Lanka provide many services for the well fare of it's people, some of those services are :</p>
        <ol>
          <li v-for="(service, i) in services" :key="service">{{ i + 1 }}) {{ service }}</li>
        </ol>
      </section>

      <div class="details">
        <div class="map">
          <svg viewBox="0 0 2595 1326" preserveAspectRatio="xMidYMid slice" role="img" aria-label="Map of the area">
            <rect width="2595" height="1326" fill="#f8f9fb" />
            <g v-for="t in tiles" :key="'b' + t.id" :transform="`translate(${t.x} ${t.y})`">
              <rect
                v-for="(b, i) in t.buildings" :key="i" class="building"
                :x="b[0] - b[2] / 2" :y="b[1] - b[3] / 2" :width="b[2]" :height="b[3]"
                :transform="`rotate(${b[4]} ${b[0]} ${b[1]})`"
              />
              <rect
                v-for="(b, i) in t.yards" :key="'y' + i" class="yard"
                :x="b[0] - b[2] / 2" :y="b[1] - b[3] / 2" :width="b[2]" :height="b[3]"
                :transform="`rotate(${b[4]} ${b[0]} ${b[1]})`"
              />
              <rect
                v-for="(b, i) in t.ponds" :key="'p' + i" fill="#aadcf5"
                :x="b[0] - b[2] / 2" :y="b[1] - b[3] / 2" :width="b[2]" :height="b[3]"
                :transform="`rotate(${b[4]} ${b[0]} ${b[1]})`"
              />
              <path v-if="t.stream" :d="t.stream" class="stream" />
            </g>
            <g v-for="t in tiles" :key="'c' + t.id" :transform="`translate(${t.x} ${t.y})`" class="road casing">
              <path v-for="(r, i) in t.roads" :key="i" :d="r[1]" :stroke-width="r[0]" />
            </g>
            <g v-for="t in tiles" :key="'r' + t.id" :transform="`translate(${t.x} ${t.y})`" class="road">
              <path v-for="(r, i) in t.roads" :key="i" :d="r[1]" :stroke-width="r[0] - 4" />
            </g>
            <g v-for="t in tiles" :key="'l' + t.id" :transform="`translate(${t.x} ${t.y})`">
              <g v-for="(s, i) in t.streets" :key="'s' + i">
                <path :id="`street-${t.id}-${i}`" :d="s[0]" fill="none" />
                <text class="street" :font-size="s[2]"><textPath :href="`#street-${t.id}-${i}`">{{ s[1] }}</textPath></text>
              </g>
              <g v-for="(s, i) in t.stops" :key="'t' + i" :transform="`translate(${s[0]} ${s[1]})`">
                <rect x="-9" y="-9" width="18" height="18" rx="3" fill="#35bfdc" />
                <path d="M-5 -5h10v4h-10ZM-5 2h10v3h-10Z" fill="#fff" />
              </g>
              <g v-for="(p, i) in t.pins" :key="'m' + i" :transform="`translate(${p[0]} ${p[1]})`">
                <path d="M0 0C-3 -10 -16 -16 -16 -29A16 16 0 1 1 16 -29C16 -16 3 -10 0 0Z" :fill="p[2]" />
                <path :d="glyphs[p[3]]" fill="#fff" />
              </g>
              <text v-for="(l, i) in t.labels" :key="i" class="place" :x="l[0]" :y="l[1]" :text-anchor="l[2]" :fill="l[3]">{{ l[4] }}</text>
            </g>
            <g transform="translate(840 567)">
              <path d="M452 139C448 120 430 115 430 97A22 22 0 1 1 474 97C474 115 456 120 452 139Z" fill="#ea4335" />
              <circle cx="452" cy="97" r="8" fill="#a50e0e" />
              <text class="place" x="477" y="106" fill="#c5352b">NSBM Green University</text>
              <text x="477" y="127" class="place note" fill="#5a96ea">8 min walk - work</text>
            </g>
          </svg>
        </div>

        <section class="contact">
          <h2>Contact Details</h2>
          <ul>
            <li v-for="entry in contacts" :key="entry.name">{{ entry.name }} : {{ entry.phone }}</li>
          </ul>
        </section>
      </div>
    </main>

    <footer class="site-footer">
      <p>MINISTRY OF HEALTH AND INDIGENOUS MEDICAL SERVICES</p>
    </footer>
  </div>
</template>

<style>
body {
  margin: 0;
  background: #fff;
}
</style>

<style scoped>
.page {
  font-family: "Liberation Serif", "Times New Roman", serif;
  font-size: 35px;
  line-height: 40px;
  color: #000;
  overflow-x: hidden;
}

.page *,
.page {
  box-sizing: border-box;
}

h1,
h2,
p,
ul,
ol {
  margin: 0;
  padding: 0;
}

ul,
ol {
  list-style: none;
}

h2 {
  font-size: 42px;
  line-height: 50px;
}

.site-header {
  background: #3b9fee;
  border: 1px solid #707070;
  border-right: 0;
  padding-left: 74px;
  color: #707070;
}

.languages {
  display: flex;
  justify-content: flex-end;
  gap: 29px;
  padding-right: 44px;
}

.language {
  display: block;
  width: 112px;
  height: 33px;
  padding: 0;
  border: 1px solid #707070;
  border-top: 0;
  background: #fff;
  color: inherit;
  font-family: inherit;
  font-size: 28px;
  line-height: 30px;
}

.language.si {
  font-size: 32px;
}

.masthead {
  display: flex;
  justify-content: space-between;
  align-items: flex-start;
  margin-top: 28px;
  padding-right: 173px;
}

.brand {
  width: 906px;
  height: 58px;
  padding: 20px 0 0 18px;
  border: 1px solid #707070;
  background: #fff;
  font-size: 30px;
  line-height: 34px;
  white-space: nowrap;
}

.search {
  display: flex;
  align-items: center;
  width: 455px;
  height: 59px;
  margin-top: 5px;
  padding: 0 47px 0 16px;
  border: 1px solid #707070;
  border-radius: 30px;
  background: #fff;
}

.search-field {
  flex: 1;
  min-width: 0;
  padding: 0;
  border: 0;
  outline: 0;
  background: none;
  color: #707070;
  font-family: inherit;
  font-size: 25px;
  line-height: 30px;
}

.search-field::placeholder {
  color: #909090;
  opacity: 1;
}

.search-button {
  display: block;
  height: 34px;
  padding: 0;
  border: 0;
  background: none;
}

.search-button svg {
  display: block;
}

.nav {
  display: flex;
  align-items: flex-start;
  height: 54px;
  margin-top: 31px;
  padding-right: 27px;
}

.nav-link {
  height: 54px;
  padding-top: 6px;
  border: 1px solid #707070;
  background: #fff;
  color: inherit;
  font-size: 33px;
  text-decoration: none;
}

.wellbeing {
  width: 212px;
  padding-left: 27px;
}

.lifestyle {
  width: 203px;
  margin-left: 68px;
  padding-left: 46px;
}

.travelers {
  width: 223px;
  margin-left: 80px;
  padding-left: 43px;
}

.notices {
  width: 195px;
  margin-left: 62px;
  padding-left: 57px;
  font-size: 34px;
}

.contacts {
  width: 187px;
  margin-left: 61px;
  padding: 1px 0 0 22px;
  font-size: 38px;
}

.login {
  width: 173px;
  margin: 3px 0 0 auto;
  padding: 4px 0 0 44px;
  height: 55px;
  font-size: 37px;
}

.intro {
  padding: 47px 40px 0;
}

.intro h1 {
  font-size: 45px;
  line-height: 52px;
}

.intro p {
  margin-top: 44px;
  font-size: 36px;
  line-height: 42px;
}

.vision {
  margin: 164px 366px 0 0;
  padding: 19px 39px 46px;
  border: 1px solid #707070;
}

.vision h2,
.mission h2 {
  margin-bottom: 16px;
  font-size: 45px;
}

.mission {
  margin: 70px 7px 0 292px;
  padding: 16px 0 24px 13px;
  border: 1px solid #707070;
}

.mission h2 {
  padding-right: 48px;
  text-align: right;
}

.services {
  padding: 32px 40px 0 66px;
}

.services p {
  margin-top: 60px;
}

.services ol {
  padding-left: 9px;
}

.details {
  display: flex;
  align-items: flex-start;
  gap: 102px;
  margin-top: 153px;
  padding: 0 56px 0 39px;
}

.map {
  flex: 867;
  margin-top: 7px;
  border: 1px solid #707070;
}

.map svg {
  display: block;
  width: 100%;
  height: auto;
}

.building {
  fill: #f1f2f4;
  stroke: #ecedef;
  stroke-width: 2;
}

.yard {
  fill: #fff9e8;
  stroke: #fae6bd;
  stroke-width: 2;
}

.stream {
  fill: none;
  stroke: #a5d5f8;
  stroke-width: 4;
}

.road {
  fill: none;
  stroke: #fff;
  stroke-linecap: round;
  stroke-linejoin: round;
}

.casing {
  stroke: #e4e6e8;
}

.place,
.street {
  font-family: Roboto, sans-serif;
}

.place {
  font-size: 24px;
}

.note {
  font-size: 19px;
}

.street {
  fill: #6b6f73;
}

.contact {
  flex: 845;
  min-height: 444px;
  padding-top: 24px;
  border: 1px solid #707070;
}

.contact h2 {
  padding-left: 30px;
  text-align: center;
}

.contact ul {
  margin-top: 76px;
  padding-left: 89px;
}

.site-footer {
  margin: 82px 7px 0 0;
  padding: 30px 0 26px 4px;
  border: 1px solid #707070;
  border-bottom: 0;
  background: #3b9fee;
  color: #397373;
  font-size: 32px;
  font-weight: bold;
  text-align: center;
}
</style>
